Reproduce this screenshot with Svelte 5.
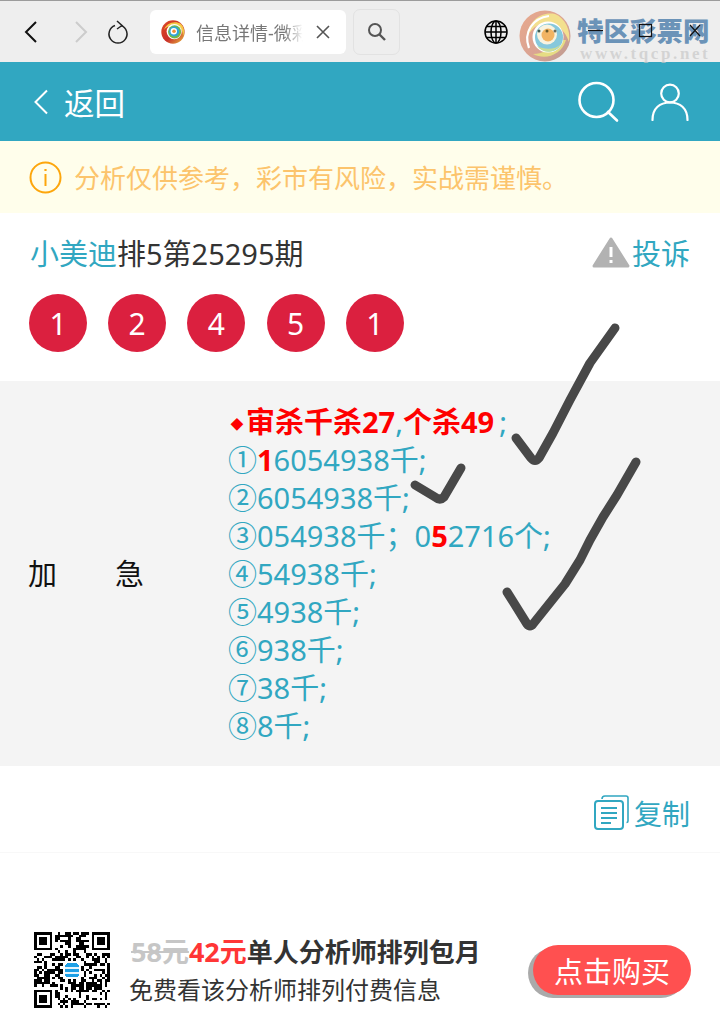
<script>
  const balls = [1, 2, 4, 5, 1];
  const tipLines = ["6054938千;", "054938千；", "54938千;", "4938千;", "938千;", "38千;", "8千;"];

  // fake qr modules, finder squares are drawn apart
  const N = 29;
  let seed = 73;
  function rnd() {
    seed = (seed * 16807) % 2147483647;
    return seed / 2147483647;
  }
  const cells = [];
  for (let y = 0; y < N; y++) {
    for (let x = 0; x < N; x++) {
      const inFinder = (x < 8 && y < 8) || (x > N - 9 && y < 8) || (x < 8 && y > N - 9);
      const inLogo = x > 10 && x < 18 && y > 10 && y < 18;
      if (!inFinder && !inLogo && rnd() > 0.5) cells.push({ x, y });
    }
  }
  const finders = [[0, 0], [N - 7, 0], [0, N - 7]];
</script>

<div class="page">
  <div class="browser">
    <svg class="nav" width="24" height="28" viewBox="0 0 24 28"><path d="M17 4 L7 14 L17 24" fill="none" stroke="#111" stroke-width="2"/></svg>
    <svg class="nav fwd" width="24" height="28" viewBox="0 0 24 28"><path d="M7 4 L17 14 L7 24" fill="none" stroke="#ccc" stroke-width="2"/></svg>
    <svg class="nav reload" width="24" height="26" viewBox="0 0 24 26"><path d="M9 6.5 A9 9 0 1 0 15 6.5" fill="none" stroke="#222" stroke-width="1.5"/><path d="M11 2 L16 6.5 L11 10" fill="none" stroke="#222" stroke-width="1.5"/></svg>
    <div class="tab">
      <svg class="favicon" width="24" height="24" viewBox="0 0 24 24">
        <defs>
          <linearGradient id="fav" x1="0" y1="0" x2="1" y2="1">
            <stop offset="0" stop-color="#e04a22"/><stop offset="0.55" stop-color="#c9302a"/><stop offset="1" stop-color="#e8c040"/>
          </linearGradient>
        </defs>
        <circle cx="12" cy="12" r="11.7" fill="url(#fav)"/>
        <path d="M3 10 C5 3 14 0 20 4 C23 7 24 12 22 16 C22 8 16 4 11 5 C7 6 4 8 3 10 Z" fill="#f6c945"/>
        <circle cx="13.2" cy="11.6" r="7.6" fill="#fff"/>
        <circle cx="13.6" cy="11.8" r="6.6" fill="#70b84c"/>
        <circle cx="13.2" cy="11.4" r="5" fill="#2fa4d8"/>
        <circle cx="12.8" cy="11.2" r="3.2" fill="#fff"/>
        <circle cx="13" cy="11.2" r="1.8" fill="#ee8f35"/>
      </svg>
      <span class="tab-title">信息详情-微彩</span>
      <svg class="tab-x" width="16" height="16" viewBox="0 0 16 16"><path d="M2 2 L14 14 M14 2 L2 14" stroke="#555" stroke-width="1.6"/></svg>
    </div>
    <div class="search-btn">
      <svg width="22" height="22" viewBox="0 0 22 22"><circle cx="9" cy="9" r="6" fill="none" stroke="#555" stroke-width="2"/><path d="M13.5 13.5 L19 19" stroke="#555" stroke-width="2.4"/></svg>
    </div>
    <svg class="globe" width="24" height="24" viewBox="0 0 24 24" fill="none" stroke="#000" stroke-width="1.5">
      <circle cx="12" cy="12" r="11"/><ellipse cx="12" cy="12" rx="5" ry="11"/><path d="M12 1 V23 M1 12 H23 M2.6 6.5 H21.4 M2.6 17.5 H21.4"/>
    </svg>
  </div>

  <header class="bar">
    <div class="back">
      <svg width="18" height="26" viewBox="0 0 18 26"><path d="M15 1.5 L3.5 13 L15 24.5" fill="none" stroke="#fff" stroke-width="2"/></svg>
      <span>返回</span>
    </div>
    <div class="bar-icons">
      <svg width="42" height="42" viewBox="0 0 42 42" fill="none" stroke="#fff" stroke-width="2.6"><circle cx="19.5" cy="19" r="17"/><path d="M31 31 L40 39.5" stroke-linecap="round"/></svg>
      <svg width="38" height="38" viewBox="0 0 38 38" fill="none" stroke="#fff" stroke-width="2.2"><circle cx="19" cy="10.5" r="8.8"/><path d="M1.5 37 C1.5 25 9 19.5 19 19.5 C29 19.5 36.5 25 36.5 37" stroke-linecap="round"/></svg>
    </div>
  </header>

  <div class="notice">
    <svg width="33" height="33" viewBox="0 0 33 33" fill="none" stroke="#fda60c" stroke-width="2"><circle cx="16.5" cy="16.5" r="15"/><path d="M16.5 13 V25" /><path d="M16.5 8 V10" stroke-width="2.2"/></svg>
    <span>分析仅供参考，彩市有风险，实战需谨慎。</span>
  </div>

  <div class="title-row">
    <div class="title"><span class="teal">小美迪</span>排5第25295期</div>
    <div class="report">
      <svg width="38" height="31" viewBox="0 0 38 31"><path d="M19 2 L36 29 H2 Z" fill="#b2b2b2" stroke="#b2b2b2" stroke-width="3" stroke-linejoin="round"/><path d="M19 10 V20" stroke="#fff" stroke-width="3"/><path d="M19 23 V26" stroke="#fff" stroke-width="3"/></svg>
      <span class="teal">投诉</span>
    </div>
  </div>

  <div class="balls">
    {#each balls as b}
      <div class="ball">{b}</div>
    {/each}
  </div>

  <section class="tips">
    <div class="tips-label">加&emsp;&emsp;急</div>
    <div class="tips-body">
      <div class="line"><span class="hit"><span class="diamond">◆</span>审杀千杀27</span>,<span class="hit">个杀49</span><span class="semi">;</span></div>
      <div class="line">①<span class="hit">1</span>6054938千;</div>
      <div class="line">②{tipLines[0]}</div>
      <div class="line">③{tipLines[1]}0<span class="hit">5</span>2716个;</div>
      <div class="line">④{tipLines[2]}</div>
      <div class="line">⑤{tipLines[3]}</div>
      <div class="line">⑥{tipLines[4]}</div>
      <div class="line">⑦{tipLines[5]}</div>
      <div class="line">⑧{tipLines[6]}</div>
    </div>
  </section>

  <div class="copy-row">
    <svg width="35" height="35" viewBox="0 0 35 35" fill="none" stroke="#31a7c1" stroke-width="1.6">
      <path d="M8 4 C8 1.5 9 1 11 1 H32 C33.5 1 34 2 34 3 V26 C34 27 33.5 27.5 32.5 27.5"/>
      <rect x="1" y="6" width="28" height="28" rx="3" stroke-width="2"/>
      <path d="M7 13 H23 M7 18 H23 M7 23 H23 M7 28 H17" stroke-width="2"/>
    </svg>
    <span class="teal">复制</span>
  </div>

  <div class="promo">
    <svg class="qr" width="76" height="76" viewBox="0 0 {N} {N}" shape-rendering="crispEdges">
      {#each cells as c}
        <rect x={c.x} y={c.y} width="1" height="1" fill="#000"/>
      {/each}
      {#each finders as f}
        <rect x={f[0] + 0.5} y={f[1] + 0.5} width="6" height="6" fill="none" stroke="#000"/>
        <rect x={f[0] + 2} y={f[1] + 2} width="3" height="3" fill="#000"/>
      {/each}
      <rect x="12" y="12" width="5" height="5.2" rx="0.6" fill="#1ea0e6"/>
      <path d="M12 13.8 H17 M12 15.6 H17" stroke="#e4f4fd" stroke-width="0.6"/>
    </svg>
    <div class="promo-text">
      <div class="promo-top"><s>58元</s><b class="price">42元</b><b>单人分析师排列包月</b></div>
      <div class="promo-sub">免费看该分析师排列付费信息</div>
    </div>
    <div class="buy">点击购买</div>
  </div>

  <!-- hand drawn marks on the screenshot -->
  <svg class="marks" width="720" height="1019" viewBox="0 0 720 1019" fill="none" stroke="#484848" stroke-width="9" stroke-linecap="round" stroke-linejoin="round">
    <path d="M516 438 L531 458 Q535 463 539 458 L553 433 L570 400 L590 363 L615 328"/>
    <path d="M415 485 L435 497 Q440 501 444 497 L461 468"/>
    <path d="M507 592 L527 624 Q530 628 533 624 L565 584 L580 560 L590 540 L603 517 L617 495 L636 462"/>
  </svg>

  <!-- site watermark + window buttons pasted over the top -->
  <div class="watermark">
    <svg class="wm-logo" width="52" height="52" viewBox="0 0 52 52">
      <defs>
        <linearGradient id="wm" x1="0" y1="0" x2="1" y2="1">
          <stop offset="0" stop-color="#e8a98c"/><stop offset="0.6" stop-color="#d9a394"/><stop offset="1" stop-color="#b89a90"/>
        </linearGradient>
      </defs>
      <circle cx="26" cy="26" r="25.5" fill="url(#wm)"/>
      <path d="M8 28 C8 12 22 1 36 4 C46 8 52 20 50 32 C46 20 38 14 28 13 C18 13 11 20 8 28 Z" fill="#f3e08e"/>
      <path d="M10 38 C4 22 14 8 30 6" fill="none" stroke="#fff" stroke-width="2.2"/>
      <path d="M14 44 C26 50 42 46 47 30 L38 30 C34 38 24 44 14 44 Z" fill="#e6dc84"/>
      <circle cx="29" cy="27" r="15.5" fill="#fff"/>
      <circle cx="30" cy="27.5" r="14" fill="#86c8dc"/>
      <path d="M18 36 C24 44 36 44 42 34 C36 40 26 40 18 36 Z" fill="#c9dd9a"/>
      <circle cx="28" cy="24.5" r="10" fill="#f8f3e0"/>
      <circle cx="29" cy="25" r="6.5" fill="#f2b463"/>
      <circle cx="20" cy="21" r="1.5" fill="#3f5a50"/><circle cx="28" cy="21" r="1.5" fill="#6a5a2a"/><circle cx="36" cy="21" r="1.5" fill="#6a6a5a"/>
    </svg>
    <div class="wm-name">特区彩票网</div>
    <div class="wm-url">www.tqcp.net</div>
    <svg class="winbtns" width="120" height="20" viewBox="0 0 120 20" fill="none" stroke="#111" stroke-width="1.2">
      <path d="M4 10.5 H19"/><rect x="55.5" y="4.5" width="12" height="12"/><path d="M106 5 L116 16 M116 5 L106 16"/>
    </svg>
  </div>
</div>

<style>
  :global(body) {
    margin: 0;
    background: #fff;
  }
  .page {
    position: relative;
    width: 720px;
    height: 1019px;
    overflow: hidden;
    font-family: "Noto Sans", "Noto Sans CJK SC", sans-serif;
    color: #333;
    background: #fff;
  }
  .teal {
    color: #31a7c1;
  }

  .browser {
    height: 62px;
    box-sizing: border-box;
    border-top: 1px solid #9c9c9c;
    background: #eeeeee;
    display: flex;
    align-items: center;
    padding-left: 19px;
  }
  .nav {
    flex: none;
  }
  .fwd {
    margin-left: 26px;
  }
  .reload {
    margin-left: 13px;
  }
  .tab {
    margin-left: 20px;
    width: 196px;
    height: 44px;
    background: #fff;
    border-radius: 6px;
    display: flex;
    align-items: center;
    padding-left: 11px;
    box-sizing: border-box;
  }
  .tab-title {
    margin-left: 11px;
    width: 107px;
    white-space: nowrap;
    overflow: hidden;
    font-size: 18px;
    color: #777;
    mask-image: linear-gradient(90deg, #000 82%, transparent);
  }
  .tab-x {
    margin-left: 12px;
  }
  .search-btn {
    margin-left: 7px;
    width: 47px;
    height: 46px;
    box-sizing: border-box;
    border: 1.5px solid #e2e2e2;
    border-radius: 7px;
    display: flex;
    align-items: center;
    justify-content: center;
  }
  .globe {
    margin-left: 84px;
  }

  .bar {
    height: 79px;
    background: #31a7c1;
    display: flex;
    align-items: center;
    justify-content: space-between;
    padding: 0 31px 0 32px;
    color: #fff;
  }
  .back {
    display: flex;
    align-items: center;
    gap: 14px;
    font-size: 30.5px;
  }
  .bar-icons {
    display: flex;
    align-items: center;
    gap: 32px;
  }

  .notice {
    height: 72px;
    background: #fffeeb;
    display: flex;
    align-items: center;
    gap: 12px;
    padding-left: 29px;
    font-size: 26px;
    color: #fcc46c;
  }

  .title-row {
    display: flex;
    align-items: center;
    justify-content: space-between;
    padding: 15px 30px 0;
    height: 48px;
    font-size: 29px;
  }
  .report {
    display: flex;
    align-items: center;
    gap: 2px;
  }
  .balls {
    display: flex;
    gap: 21.2px;
    padding: 18px 29px 29px;
  }
  .ball {
    width: 58px;
    height: 58px;
    border-radius: 50%;
    background: #db203f;
    color: #fff;
    font-size: 30px;
    display: flex;
    align-items: center;
    justify-content: center;
  }

  .tips {
    background: #f4f4f4;
    height: 385px;
    display: flex;
    align-items: center;
  }
  .tips-label {
    width: 228px;
    padding: 0 0 3px 28px;
    box-sizing: border-box;
    font-size: 29px;
    color: #111;
  }
  .tips-body {
    flex: 1;
    font-size: 29px;
    color: #31a7c1;
    align-self: flex-start;
    padding-top: 22px;
  }
  .line {
    height: 38px;
    line-height: 38px;
    white-space: nowrap;
  }
  .hit {
    color: #f00;
    font-weight: 700;
  }
  .diamond {
    display: inline-block;
    width: 18px;
    text-align: center;
    font-size: 13px;
    vertical-align: 4px;
  }
  .semi {
    margin-left: 5px;
  }

  .copy-row {
    display: flex;
    align-items: center;
    justify-content: flex-end;
    gap: 5px;
    padding: 29px 30px 22px;
    height: 35px;
    font-size: 28px;
    border-bottom: 1px solid #f8f8f8;
  }

  .promo {
    margin-top: 79px;
    display: flex;
    align-items: center;
    padding: 0 29px 0 34px;
  }
  .qr {
    flex: none;
  }
  .promo-text {
    margin-left: 19px;
    flex: 1;
  }
  .promo-top {
    font-size: 26px;
    line-height: 38px;
    color: #333;
    padding-left: 2px;
  }
  .promo-top s {
    color: #c6c6c6;
    font-weight: 700;
    font-size: 27px;
  }
  .price {
    color: #ff3636;
    font-size: 27px;
  }
  .promo-sub {
    font-size: 24px;
    line-height: 37px;
  }
  .buy {
    width: 158px;
    height: 50px;
    border-radius: 25px;
    background: #ff5050;
    box-shadow: -5px 3px 0 #aaa;
    color: #fff;
    font-size: 29px;
    display: flex;
    align-items: center;
    justify-content: center;
  }

  .marks {
    position: absolute;
    left: 0;
    top: 0;
    pointer-events: none;
  }

  .watermark {
    position: absolute;
    left: 519px;
    top: 10px;
    width: 201px;
    height: 54px;
  }
  .wm-logo {
    position: absolute;
    left: 0;
    top: 0;
  }
  .wm-name {
    position: absolute;
    left: 58px;
    top: 8px;
    font-size: 26.5px;
    line-height: 27px;
    font-weight: 900;
    color: #6b93b8;
    white-space: nowrap;
  }
  .wm-url {
    position: absolute;
    left: 61px;
    top: 35px;
    font-family: "Liberation Serif", serif;
    font-size: 17px;
    line-height: 18px;
    font-weight: 700;
    letter-spacing: 2.6px;
    color: rgba(200, 200, 200, 0.7);
    white-space: nowrap;
  }
  .winbtns {
    position: absolute;
    left: 65px;
    top: 10px;
  }
</style>
